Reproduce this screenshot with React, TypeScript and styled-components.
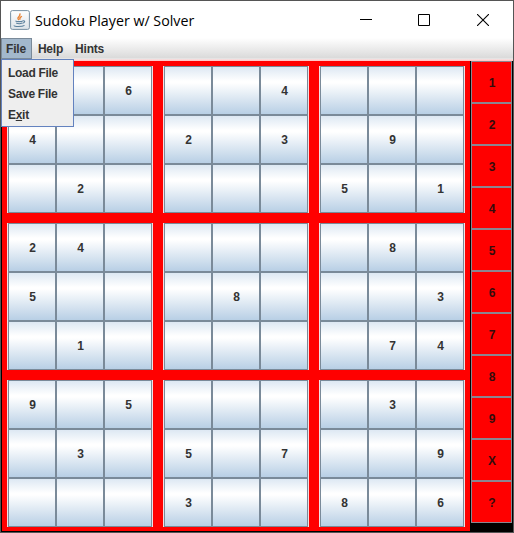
import React from 'react';
import styled, { createGlobalStyle } from 'styled-components';

const Global = createGlobalStyle`
  * { box-sizing: border-box; }
  body { margin: 0; background: #fff; }
`;

const Window = styled.div`
  position: relative;
  width: 514px;
  height: 533px;
  overflow: hidden;
  display: flex;
  flex-direction: column;
  border: 1px solid #555;
  background: #fff;
  font: bold 12px/14px "Liberation Sans", Arial, sans-serif;
  color: #333;
`;

const TitleBar = styled.header`
  height: 37px;
  flex: none;
  display: flex;
  align-items: center;
  padding-left: 9px;
`;

const Title = styled.h1`
  margin: 0 auto 0 5px;
  font: 400 15.2px/20px "Open Sans", "Noto Sans", sans-serif;
  color: #000;
  white-space: nowrap;
  transform: scaleX(0.937);
  transform-origin: left;
`;

const WindowControls = styled.div`
  display: flex;
  margin-right: 7px;
`;

const ControlButton = styled.button`
  width: 58px;
  height: 36px;
  padding: 0;
  border: 0;
  background: none;
  display: grid;
  place-items: center;
  &:last-child { width: 46px; margin-left: 7px; }
`;

const MenuBar = styled.nav`
  position: relative;
  height: 23px;
  flex: none;
  display: flex;
  letter-spacing: -0.2px;
  background: linear-gradient(#fff, #dadada 20px, #eee 21px, #ffc9c9 22px);
`;

const MenuTitle = styled.div<{ $open?: boolean }>`
  height: 21px;
  padding: ${p => (p.$open ? '3px 5px 0 4px' : '4px 6px 0')};
  border: ${p => (p.$open ? '1px solid #7a8a99' : '0')};
  background: ${p => (p.$open ? '#a3b8cc' : 'transparent')};
`;

const Popup = styled.div`
  position: absolute;
  z-index: 2;
  left: 0;
  top: 21px;
  width: 73px;
  height: 68px;
  padding: 2px 6px;
  border: 1px solid #6382bf;
  background: #eee;
  letter-spacing: -0.3px;
`;

const MenuItem = styled.div`
  height: 21px;
  padding-top: 4px;
  white-space: nowrap;
`;

const Mnemonic = styled.span`
  text-decoration: underline;
  text-underline-offset: 1px;
`;

const Content = styled.main`
  flex: 1;
  display: flex;
  background: #000;
  padding-left: 1px;
`;

const Board = styled.section`
  width: 468px;
  height: 470px;
  padding: 5px;
  display: grid;
  grid-template-columns: repeat(3, 146px);
  grid-auto-rows: 147px;
  gap: 10px;
  background: #f00;
`;

const Box = styled.div`
  display: grid;
  grid-template-columns: repeat(3, 48px);
  grid-auto-rows: 49px;
  border: solid #f3dfe2;
  border-width: 0 1px;
`;

const Cell = styled.button`
  padding: 0 0 0 1px;
  border: 1px solid #7a8a99;
  background: linear-gradient(#dde8f3 0%, #fff 30%, #fff 34%, #b8cfe5 100%);
  color: #333;
  font: inherit;
  display: grid;
  place-items: center;
`;

const Keypad = styled.aside`
  width: 41px;
  margin-left: 1px;
  display: flex;
  flex-direction: column;
`;

const Key = styled.button`
  height: 42px;
  flex: none;
  padding: 2px 0 0 1px;
  border: 1px solid #8b8590;
  background: #f00;
  color: #330c0c;
  font: inherit;
`;

const puzzle = [
  '  6  4   ',
  '4  2 3 9 ',
  ' 2    5 1',
  '24     8 ',
  '5   8   3',
  ' 1     74',
  '9 5    3 ',
  ' 3 5 7  9',
  '   3  8 6',
];

const keys = ['1', '2', '3', '4', '5', '6', '7', '8', '9', 'X', '?'];
const triple = [0, 1, 2];

function JavaIcon() {
  return (
    <svg width="20" height="20" viewBox="0 0 20 20" fill="none">
      <defs>
        <linearGradient id="tile" x1="0" y1="0" x2="0" y2="1">
          <stop stopColor="#fff" />
          <stop offset="1" stopColor="#dbe2e8" />
        </linearGradient>
      </defs>
      <rect x=".6" y=".6" width="18.8" height="18.8" rx="1.8" fill="url(#tile)" stroke="#7890a3" />
      <path d="M9 10c-3.4-2.6 2.3-3.4.8-6.6M10.4 9.6c-1.8-1.8.7-2.1 1.2-3.5" stroke="#e98639" strokeWidth="1.4" />
      <path d="M5.4 10.9c1.3 1 6.2 1 7.5 0M6.2 13c1.4.7 4.6.7 6 0M12.9 10.8c2.7-.4 2.1 1.9-.4 2.4M4.3 15.4c-1 1.5 8 1.6 10.2 0" stroke="#5c819d" strokeWidth="1.1" />
    </svg>
  );
}

export default function App() {
  return (
    <>
      <Global />
      <Window>
        <TitleBar>
          <JavaIcon />
          <Title>Sudoku Player w/ Solver</Title>
          <WindowControls>
            <ControlButton aria-label="Minimize">
              <svg width="12" height="12" stroke="#000"><path d="M0 5.5h12" /></svg>
            </ControlButton>
            <ControlButton aria-label="Maximize">
              <svg width="12" height="12" fill="none" stroke="#000"><path d="M.5.5h11v11H.5z" /></svg>
            </ControlButton>
            <ControlButton aria-label="Close">
              <svg width="12" height="12" stroke="#000" strokeWidth="1.1"><path d="m0 0 12 12M12 0 0 12" /></svg>
            </ControlButton>
          </WindowControls>
        </TitleBar>
        <MenuBar>
          <MenuTitle $open>File</MenuTitle>
          <MenuTitle>Help</MenuTitle>
          <MenuTitle>Hints</MenuTitle>
          <Popup>
            <MenuItem>Load File</MenuItem>
            <MenuItem>Save File</MenuItem>
            <MenuItem>E<Mnemonic>x</Mnemonic>it</MenuItem>
          </Popup>
        </MenuBar>
        <Content>
          <Board>
            {triple.map(br => triple.map(bc => (
              <Box key={`${br}${bc}`}>
                {triple.map(r => triple.map(c => (
                  <Cell key={`${r}${c}`}>{puzzle[br * 3 + r][bc * 3 + c].trim()}</Cell>
                )))}
              </Box>
            )))}
          </Board>
          <Keypad>
            {keys.map(k => <Key key={k}>{k}</Key>)}
          </Keypad>
        </Content>
      </Window>
    </>
  );
}
